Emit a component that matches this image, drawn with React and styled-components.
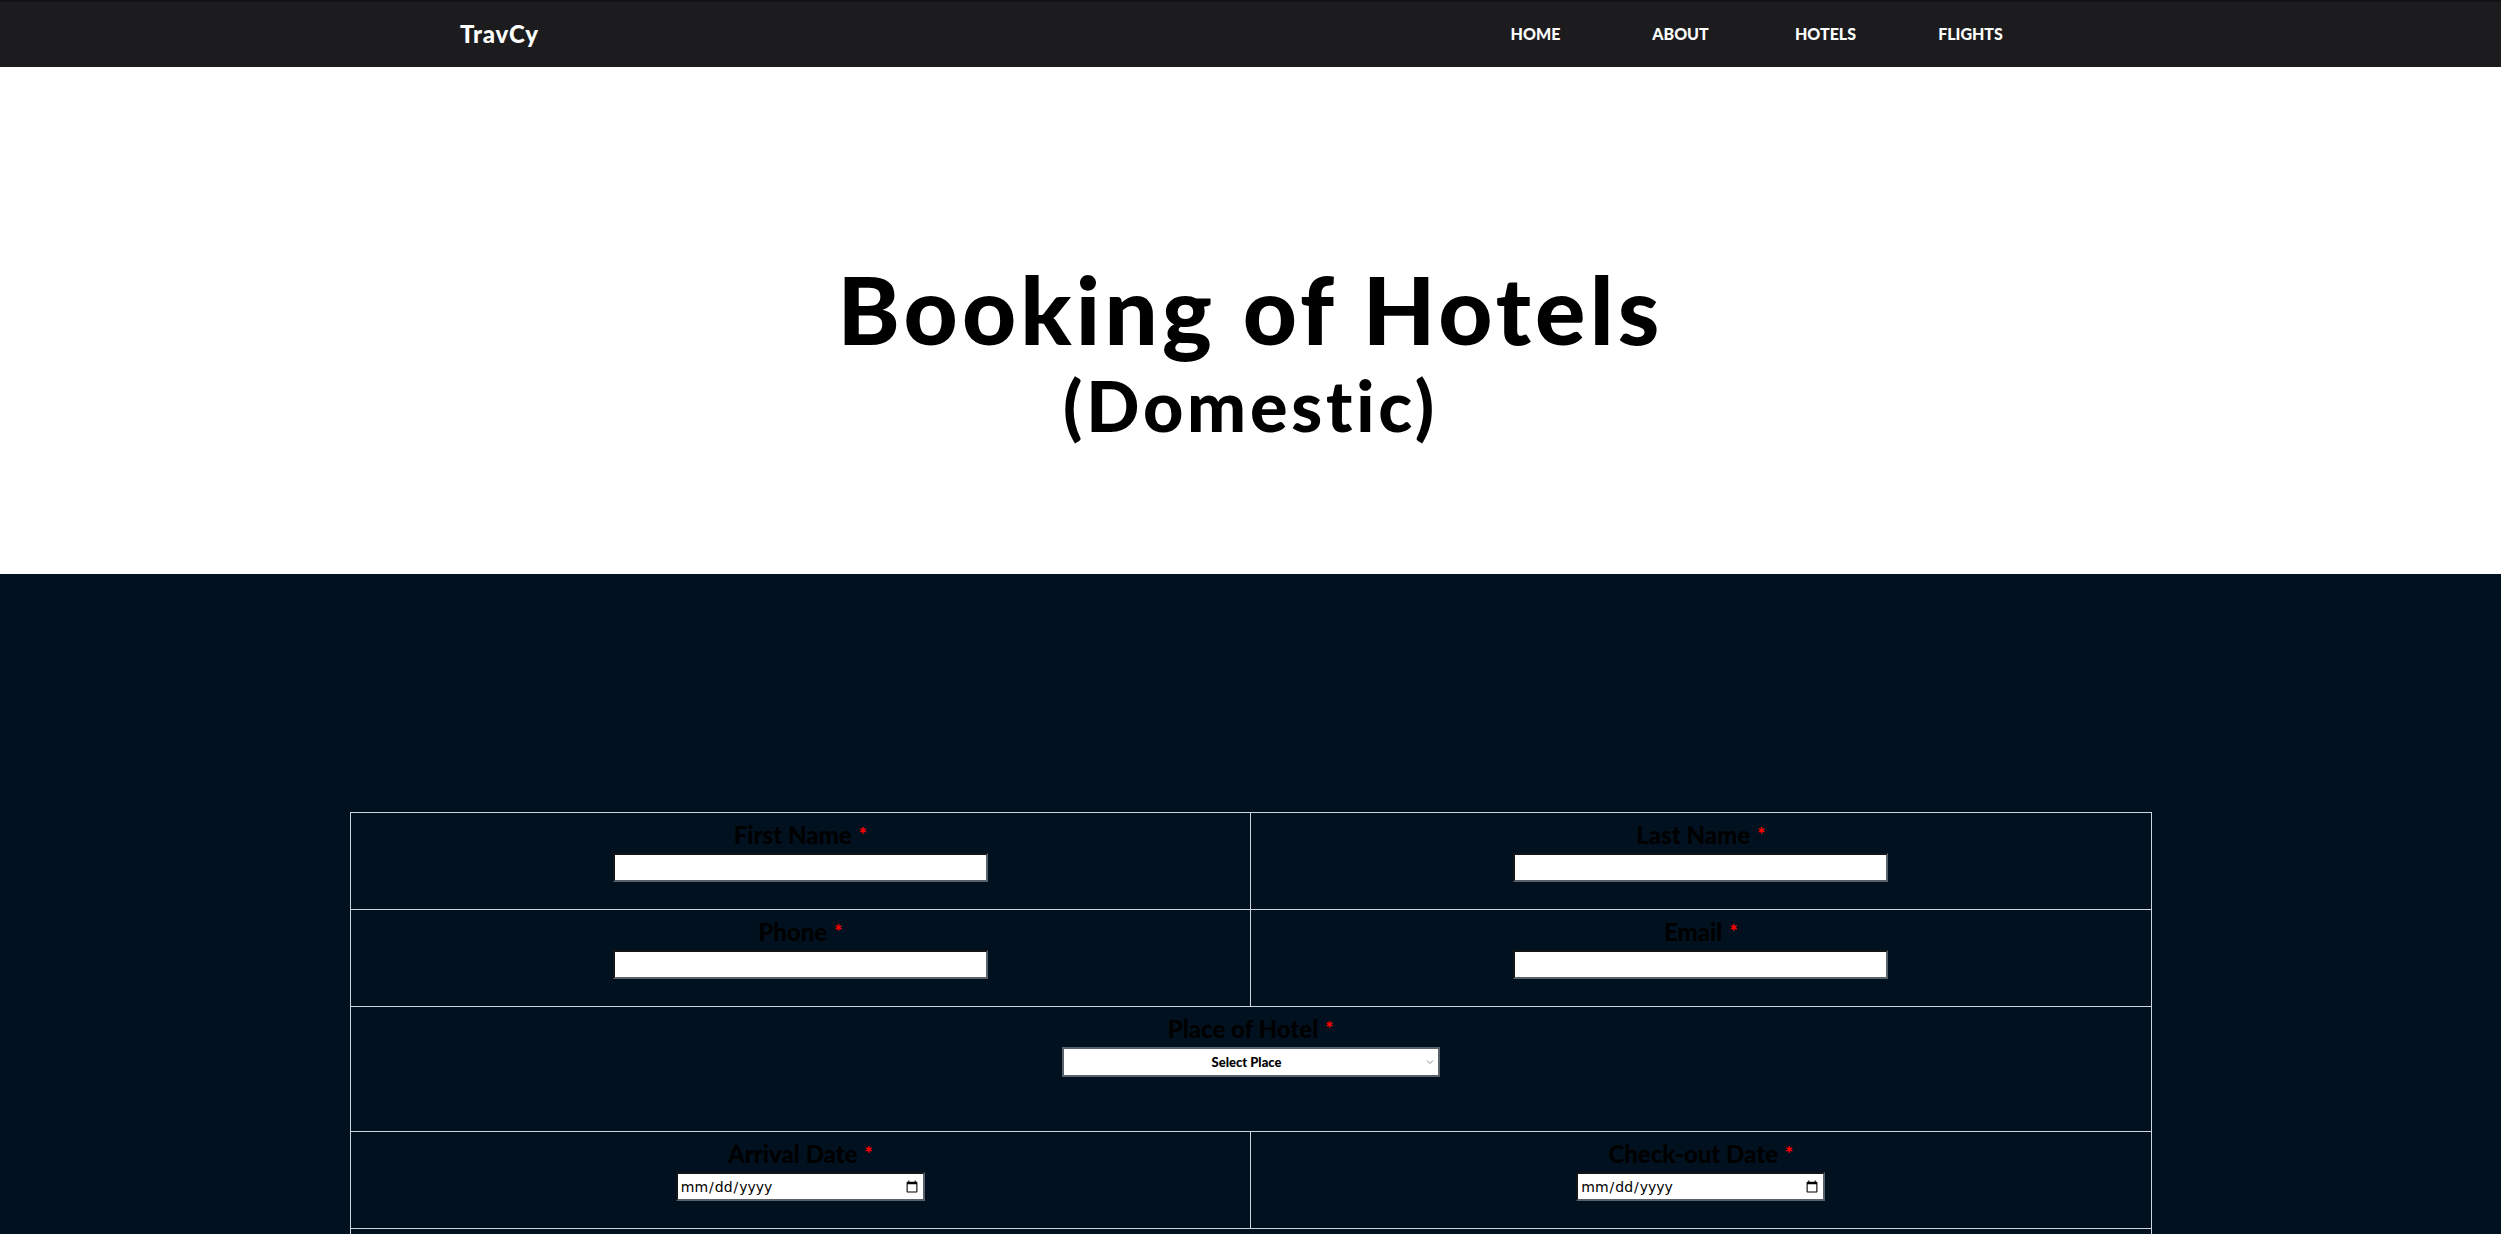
import React from "react";
import styled, { createGlobalStyle } from "styled-components";

const Global = createGlobalStyle`
  html, body { margin: 0; padding: 0; background: #02111f; }
  body { font-family: "Lato", "Open Sans", sans-serif; }
  * { box-sizing: border-box; }
`;

const Nav = styled.header`
  height: 67px;
  background: #1c1c1e;
  border-top: 2px solid #131316;
  display: flex;
  align-items: center;
  padding-left: 460px;
`;

const Brand = styled.div`
  color: #fff;
  font-family: "Lato", sans-serif;
  font-weight: 900;
  font-size: 24px;
  letter-spacing: 0.8px;
  width: 1003px;
  margin-top: -2px;
`;

const Links = styled.nav`
  display: flex;
`;

const NavLink = styled.a`
  display: block;
  width: 145px;
  text-align: center;
  color: #fff;
  font-family: "Lato", sans-serif;
  font-weight: 900;
  font-size: 16px;
  text-decoration: none;
  margin-top: -2px;
`;

const Hero = styled.section`
  background: #fff;
  height: 507px;
  display: flex;
  flex-direction: column;
  align-items: center;
  padding-top: 195px;
`;

const Title = styled.h1`
  margin: 0;
  font-family: "Lato", sans-serif;
  font-weight: 900;
  font-size: 94px;
  line-height: 1;
  color: #000;
  letter-spacing: 4.2px;
`;

const Sub = styled.h2`
  margin: 14px 0 0;
  font-family: "Lato", sans-serif;
  font-weight: 900;
  font-size: 70px;
  line-height: 1;
  color: #000;
  letter-spacing: 3.8px;
`;

const Dark = styled.section`
  background: #02111f;
  padding-top: 238px;
  min-height: 700px;
`;

const Table = styled.table`
  width: 1802px;
  margin: 0 auto;
  border-collapse: collapse;
  table-layout: fixed;
`;

const Row = styled.tr`
  height: ${(p) => p.$h}px;
`;

const Cell = styled.td`
  border: 1px solid #cdd6df;
  text-align: center;
  vertical-align: top;
  padding-top: 6px;
`;

const Label = styled.label`
  display: block;
  font-family: "Lato", sans-serif;
  font-weight: 900;
  font-size: 24px;
  line-height: 30px;
  color: #000;
  margin-bottom: 3px;
`;

const Star = styled.span`
  color: #f00;
  font-size: 19px;
  vertical-align: 3px;
  margin-left: 7px;
`;

const TextInput = styled.input`
  width: 375px;
  height: 29px;
  border: 2px inset #59616a;
  background: #fff;
  display: inline-block;
`;

const SelectWrap = styled.span`
  position: relative;
  display: inline-block;
`;

const Select = styled.select`
  appearance: none;
  -webkit-appearance: none;
  width: 378px;
  height: 30px;
  border: 2px solid #59616a;
  border-radius: 0;
  background: #fff;
  font-family: "Lato", sans-serif;
  font-weight: 900;
  font-size: 13px;
  text-align: center;
  text-align-last: center;
  color: #000;
  display: block;
  padding-right: 8px;
`;

const Chevron = styled.svg`
  position: absolute;
  right: 6px;
  top: 12px;
  width: 8px;
  height: 6px;
  pointer-events: none;
`;

const DateInput = styled.input`
  width: 249px;
  height: 29px;
  border: 2px inset #59616a;
  background: #fff;
  font-family: "DejaVu Sans", sans-serif;
  font-size: 14px;
  padding: 0 2px;
`;

function Field({ label, children }) {
  return (
    <>
      <Label>
        {label}
        <Star>*</Star>
      </Label>
      {children}
    </>
  );
}

export default function App() {
  return (
    <>
      <Global />
      <Nav>
        <Brand>TravCy</Brand>
        <Links>
          <NavLink href="#">HOME</NavLink>
          <NavLink href="#">ABOUT</NavLink>
          <NavLink href="#">HOTELS</NavLink>
          <NavLink href="#">FLIGHTS</NavLink>
        </Links>
      </Nav>
      <Hero>
        <Title>Booking of Hotels</Title>
        <Sub>(Domestic)</Sub>
      </Hero>
      <Dark>
        <Table>
          <tbody>
            <Row $h={97}>
              <Cell>
                <Field label="First Name">
                  <TextInput type="text" />
                </Field>
              </Cell>
              <Cell>
                <Field label="Last Name">
                  <TextInput type="text" />
                </Field>
              </Cell>
            </Row>
            <Row $h={97}>
              <Cell>
                <Field label="Phone">
                  <TextInput type="tel" />
                </Field>
              </Cell>
              <Cell>
                <Field label="Email">
                  <TextInput type="email" />
                </Field>
              </Cell>
            </Row>
            <Row $h={125}>
              <Cell colSpan={2}>
                <Field label="Place of Hotel">
                  <SelectWrap>
                    <Select defaultValue="">
                      <option value="">Select Place</option>
                      <option>Mumbai</option>
                      <option>Delhi</option>
                      <option>Goa</option>
                    </Select>
                    <Chevron viewBox="0 0 8 6">
                      <path d="M1 1.5 L4 4.5 L7 1.5" fill="none" stroke="#888" strokeWidth="1" />
                    </Chevron>
                  </SelectWrap>
                </Field>
              </Cell>
            </Row>
            <Row $h={97}>
              <Cell>
                <Field label="Arrival Date">
                  <DateInput type="date" />
                </Field>
              </Cell>
              <Cell>
                <Field label="Check-out Date">
                  <DateInput type="date" />
                </Field>
              </Cell>
            </Row>
            <Row $h={97}>
              <Cell colSpan={2} />
            </Row>
          </tbody>
        </Table>
      </Dark>
    </>
  );
}
